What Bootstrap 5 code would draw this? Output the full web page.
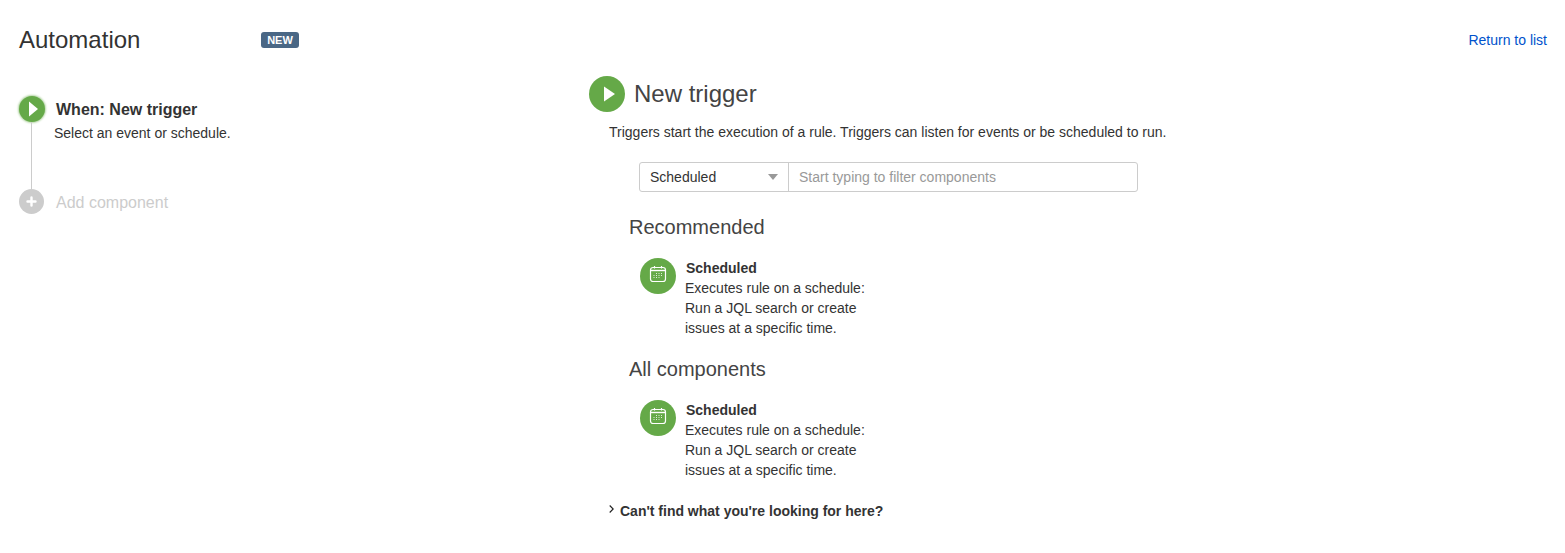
<!DOCTYPE html>
<html lang="en">
<head>
  <meta charset="UTF-8" />
  <title>Automation</title>
  <link href="https://cdn.jsdelivr.net/npm/bootstrap@5.3.2/dist/css/bootstrap.min.css" rel="stylesheet" />
  <style>
    body {
      font-family: "Liberation Sans", Arial, sans-serif;
      font-size: 14px;
      line-height: 20px;
      color: #333;
      background-color: #fff;
    }
    .page-head {
      height: 76px;
      padding: 4px 18px 0 19px;
    }
    .page-title {
      width: 242px;
      font-size: 24px;
      line-height: 32px;
      font-weight: 400;
      margin: 0;
      color: #333;
    }
    .new-tag {
      width: 38px;
      height: 16px;
      background-color: #4a6785;
      color: #fff;
      font-size: 11px;
      line-height: 16px;
      font-weight: 700;
      text-align: center;
      border-radius: 3px;
    }
    .return-link {
      color: #0052cc;
      text-decoration: none;
    }
    .side-col {
      width: 589px;
      padding: 20px 0 0 19px;
    }
    .step-dot {
      width: 26px;
      height: 26px;
      border-radius: 50%;
      background-color: #65a948;
      box-shadow: 0 0 2px 1px #b5d6a6;
    }
    .step-dot.off {
      width: 25px;
      height: 25px;
      background-color: #ccc;
      box-shadow: none;
    }
    .step-line {
      width: 1px;
      height: 67px;
      background-color: #ccc;
      margin-left: 12px;
    }
    .step-title {
      font-size: 16px;
      font-weight: 700;
      line-height: 26px;
      margin: 1px 0 0 11px;
    }
    .step-sub {
      margin: 0 0 0 9px;
    }
    .step-off {
      font-size: 16px;
      line-height: 25px;
      color: #ccc;
      margin: 1px 0 0 12px;
    }
    .icon-dot {
      width: 36px;
      height: 36px;
      border-radius: 50%;
      background-color: #65a948;
    }
    .trigger-title {
      font-size: 24px;
      line-height: 36px;
      font-weight: 400;
      margin: 0 0 0 9px;
      color: #444;
    }
    .trigger-desc {
      margin: 10px 0 20px 20px;
    }
    .filter-box {
      width: 499px;
      height: 30px;
      margin: 0 0 21px 50px;
      border: 1px solid #ccc;
      border-radius: 3px;
    }
    .filter-select {
      width: 149px;
      padding: 0 10px;
      border-right: 1px solid #ccc;
    }
    .filter-caret {
      width: 0;
      height: 0;
      border-left: 5.5px solid transparent;
      border-right: 5.5px solid transparent;
      border-top: 6px solid #999;
    }
    .filter-input {
      flex: 1;
      border: 0;
      outline: 0;
      padding: 0 10px;
      font-size: 14px;
      color: #333;
      background: transparent;
    }
    .filter-input::placeholder {
      color: #999;
      opacity: 1;
    }
    .group-title {
      font-size: 20px;
      line-height: 28px;
      font-weight: 400;
      margin: 0 0 17px 40px;
      color: #444;
    }
    .comp-item {
      margin: 0 0 17px 51px;
    }
    .comp-text {
      margin-left: 9px;
      width: 190px;
    }
    .comp-name {
      font-size: 14px;
      font-weight: 700;
      line-height: 20px;
      margin: 0 0 0 1px;
    }
    .help-row {
      margin: 21px 0 0 20px;
      font-weight: 700;
    }
    .help-arrow {
      margin: -4px 6px 0 0;
    }
  </style>
</head>
<body>
  <!-- Header -->
  <div class="page-head d-flex align-items-center justify-content-between">
    <div class="d-flex align-items-center">
      <h1 class="page-title">Automation</h1>
      <div class="new-tag">NEW</div>
    </div>
    <a class="return-link" href="#">Return to list</a>
  </div>

  <div class="d-flex">
    <!-- Rule steps -->
    <div class="side-col">
      <div class="d-flex">
        <div>
          <div class="step-dot d-flex align-items-center justify-content-center">
            <svg width="12" height="16" viewBox="0 0 12 16"><path d="M3 .5 12 8 3 15.5z" fill="#fff"/></svg>
          </div>
          <div class="step-line"></div>
        </div>
        <div>
          <div class="step-title">When: New trigger</div>
          <p class="step-sub">Select an event or schedule.</p>
        </div>
      </div>
      <div class="d-flex">
        <div class="step-dot off d-flex align-items-center justify-content-center">
          <svg width="11" height="11" viewBox="0 0 11 11"><path d="M5.5 1.5v8M1.5 5.5h8" stroke="#fff" stroke-width="2.4" stroke-linecap="round"/></svg>
        </div>
        <div class="step-off">Add component</div>
      </div>
    </div>

    <!-- Trigger picker -->
    <div class="flex-grow-1">
      <div class="d-flex align-items-center">
        <div class="icon-dot d-flex align-items-center justify-content-center">
          <svg width="16" height="20" viewBox="0 0 16 20"><path d="M5 2.5 16 10 5 17.5z" fill="#fff"/></svg>
        </div>
        <h2 class="trigger-title">New trigger</h2>
      </div>
      <p class="trigger-desc">Triggers start the execution of a rule. Triggers can listen for events or be scheduled to run.</p>

      <div class="filter-box d-flex">
        <div class="filter-select d-flex align-items-center justify-content-between">
          <span>Scheduled</span>
          <span class="filter-caret"></span>
        </div>
        <input class="filter-input" type="text" placeholder="Start typing to filter components" />
      </div>

      <h3 class="group-title">Recommended</h3>
      <div class="comp-item d-flex">
        <div class="icon-dot flex-shrink-0 d-flex align-items-center justify-content-center">
          <svg class="mb-1" width="18" height="18" viewBox="0 0 18 18" fill="none">
            <rect x="1.5" y="2.5" width="15" height="14" rx="2.5" stroke="#fff" stroke-width="1.2"/>
            <path d="M2 5.5h14" stroke="#fff" stroke-width="1.4"/>
            <path d="M5.5 1v2.5M12.5 1v2.5" stroke="#fff" stroke-width="1.2"/>
            <path d="M7 8.5h1M9.5 8.5h1M12 8.5h1M4.5 10.5h1M7 10.5h1M9.5 10.5h1M12 10.5h1M4.5 12.5h1M7 12.5h1M9.5 12.5h1" stroke="#fff" stroke-width="1.1" opacity=".8"/>
          </svg>
        </div>
        <div class="comp-text">
          <div class="comp-name">Scheduled</div>
          Executes rule on a schedule: Run a JQL search or create issues at a specific time.
        </div>
      </div>

      <h3 class="group-title">All components</h3>
      <div class="comp-item d-flex">
        <div class="icon-dot flex-shrink-0 d-flex align-items-center justify-content-center">
          <svg class="mb-1" width="18" height="18" viewBox="0 0 18 18" fill="none">
            <rect x="1.5" y="2.5" width="15" height="14" rx="2.5" stroke="#fff" stroke-width="1.2"/>
            <path d="M2 5.5h14" stroke="#fff" stroke-width="1.4"/>
            <path d="M5.5 1v2.5M12.5 1v2.5" stroke="#fff" stroke-width="1.2"/>
            <path d="M7 8.5h1M9.5 8.5h1M12 8.5h1M4.5 10.5h1M7 10.5h1M9.5 10.5h1M12 10.5h1M4.5 12.5h1M7 12.5h1M9.5 12.5h1" stroke="#fff" stroke-width="1.1" opacity=".8"/>
          </svg>
        </div>
        <div class="comp-text">
          <div class="comp-name">Scheduled</div>
          Executes rule on a schedule: Run a JQL search or create issues at a specific time.
        </div>
      </div>

      <div class="help-row d-flex align-items-center">
        <svg class="help-arrow" width="5" height="8" viewBox="0 0 5 8" fill="none"><path d="M.7 .5 4.2 4 .7 7.5" stroke="#222" stroke-width="1.1"/></svg>
        <span>Can't find what you're looking for here?</span>
      </div>
    </div>
  </div>

  <script src="https://cdn.jsdelivr.net/npm/bootstrap@5.3.2/dist/js/bootstrap.bundle.min.js"></script>
</body>
</html>
